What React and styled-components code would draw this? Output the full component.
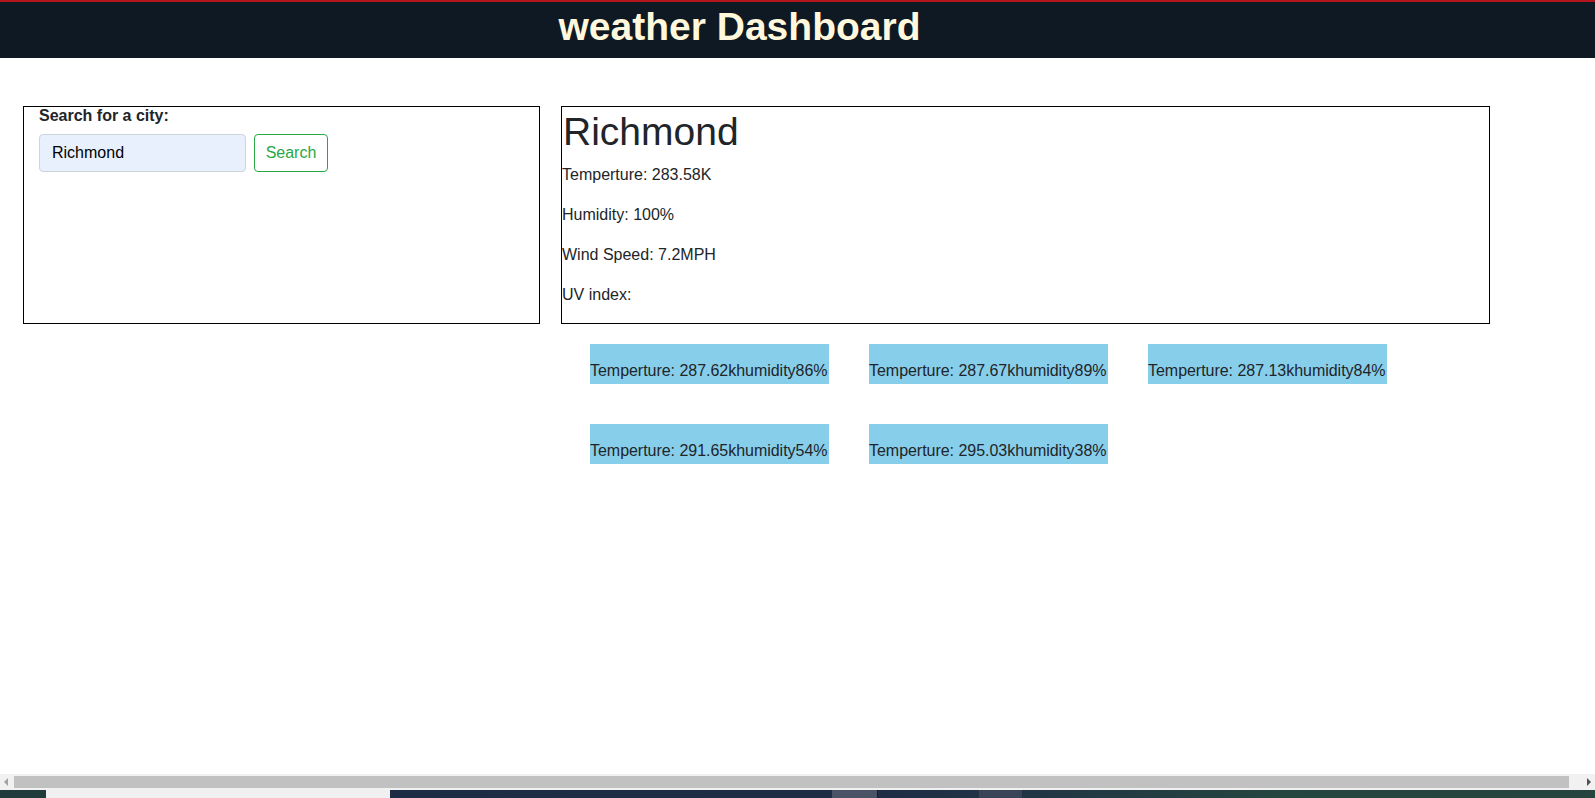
import React from "react";
import styled, { createGlobalStyle } from "styled-components";

const Global = createGlobalStyle`
  html, body { margin: 0; padding: 0; }
  body {
    font-family: "Liberation Sans", Arial, sans-serif;
    color: #212529;
    background: #fff;
    overflow: hidden;
  }
  * { box-sizing: border-box; }
`;

const Page = styled.div`
  display: flex;
  flex-direction: column;
  height: 100vh;
`;

const Header = styled.header`
  height: 58px;
  flex: none;
  background: #0e1924;
  border-top: 2px solid #b3161c;
  text-align: center;
  padding-right: 116px;
`;

const Title = styled.h1`
  margin: 0;
  font-size: 39px;
  line-height: 50px;
  font-weight: 700;
  color: #fff8dc;
`;

const Main = styled.main`
  flex: 1;
  padding: 48px 0 0 23px;
`;

const TopRow = styled.div`
  display: flex;
  gap: 21px;
  align-items: stretch;
`;

const Box = styled.section`
  border: 1px solid #000;
  width: ${(p) => p.$w}px;
  padding: ${(p) => p.$pad || "0"};
`;

const Label = styled.label`
  display: block;
  font-weight: 700;
  font-size: 16px;
  line-height: 18px;
  margin-bottom: 9px;
`;

const SearchRow = styled.div`
  display: flex;
  gap: 8px;
`;

const Input = styled.input`
  width: 207px;
  height: 38px;
  padding: 0 12px;
  font: 16px "Liberation Sans", Arial, sans-serif;
  color: #000;
  background: #e8f0fe;
  border: 1px solid #ced4da;
  border-radius: 4px;
  outline: none;
`;

const Button = styled.button`
  width: 74px;
  height: 38px;
  font: 16px "Liberation Sans", Arial, sans-serif;
  color: #28a745;
  background: #fff;
  border: 1px solid #28a745;
  border-radius: 4px;
  padding: 0;
`;

const CityName = styled.h2`
  margin: 0 0 6px;
  font-size: 39px;
  line-height: 50px;
  font-weight: 400;
  padding-left: 1px;
`;

const Stat = styled.p`
  margin: 0 0 16px;
  font-size: 16px;
  line-height: 24px;
`;

const Forecast = styled.div`
  display: grid;
  grid-template-columns: repeat(3, 239px);
  column-gap: 40px;
  row-gap: 40px;
  margin: 20px 0 0 567px;
`;

const Card = styled.div`
  height: 40px;
  background: #87ceeb;
  padding-top: 15px;
  font-size: 16px;
  line-height: 24px;
  white-space: nowrap;
  letter-spacing: -0.03px;
`;

const Scrollbar = styled.div`
  flex: none;
  height: 16px;
  background: #f1f1f1;
  display: flex;
  align-items: center;
  padding: 0 4px;
  gap: 4px;
`;

const Arrow = styled.span`
  width: 0;
  height: 0;
  border-top: 4px solid transparent;
  border-bottom: 4px solid transparent;
  ${(p) =>
    p.$dir === "left"
      ? "border-right: 4px solid #a3a3a3;"
      : "border-left: 4px solid #505050;"}
`;

const Track = styled.div`
  flex: 1;
  height: 12px;
  padding: 0 14px 0 2px;
`;

const Thumb = styled.div`
  height: 100%;
  background: #c1c1c1;
`;

const Taskbar = styled.div`
  flex: none;
  height: 8px;
  display: flex;
  background: linear-gradient(90deg, #1f2b45 0%, #1e2c46 55%, #254540 80%, #27443f 100%);
`;

const TaskSeg = styled.div`
  width: ${(p) => p.$w}px;
  flex: ${(p) => (p.$w ? "none" : "1")};
  background: ${(p) => p.$bg || "transparent"};
  border-left: ${(p) => (p.$edge ? "1px solid #15202f" : "none")};
`;

const forecast = [
  ["287.62", "86"],
  ["287.67", "89"],
  ["287.13", "84"],
  ["291.65", "54"],
  ["295.03", "38"],
];

export default function App() {
  return (
    <Page>
      <Global />
      <Header>
        <Title>weather Dashboard</Title>
      </Header>
      <Main>
        <TopRow>
          <Box $w={517} $pad="0 15px">
            <Label htmlFor="city">Search for a city:</Label>
            <SearchRow>
              <Input id="city" defaultValue="Richmond" />
              <Button>Search</Button>
            </SearchRow>
          </Box>
          <Box $w={929}>
            <CityName>Richmond</CityName>
            <Stat>Temperture: 283.58K</Stat>
            <Stat>Humidity: 100%</Stat>
            <Stat>Wind Speed: 7.2MPH</Stat>
            <Stat>UV index:</Stat>
          </Box>
        </TopRow>
        <Forecast>
          {forecast.map(([t, h], i) => (
            <Card key={i}>
              Temperture: {t}khumidity{h}%
            </Card>
          ))}
        </Forecast>
      </Main>
      <Scrollbar>
        <Arrow $dir="left" />
        <Track>
          <Thumb />
        </Track>
        <Arrow $dir="right" />
      </Scrollbar>
      <Taskbar>
        <TaskSeg $w={46} $bg="#1f3b3b" />
        <TaskSeg $w={344} $bg="#f0f0f0" />
        <TaskSeg $w={442} />
        <TaskSeg $w={45} $bg="#4a5466" />
        <TaskSeg $w={102} $edge />
        <TaskSeg $w={43} $bg="#3a4458" />
        <TaskSeg />
      </Taskbar>
    </Page>
  );
}
